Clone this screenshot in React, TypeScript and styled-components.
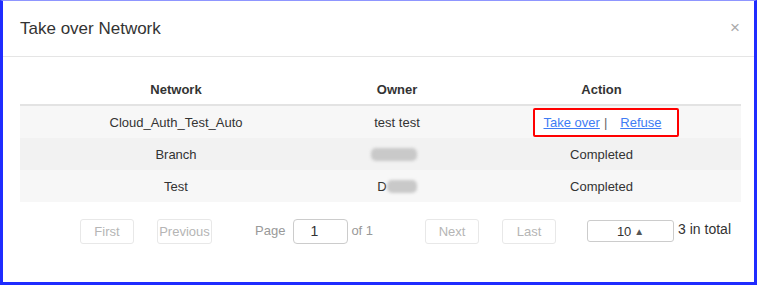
import styled, { createGlobalStyle } from 'styled-components';

const GlobalStyle = createGlobalStyle`
  html, body {
    margin: 0;
    padding: 0;
    background: #fff;
  }
  body {
    font-family: 'Liberation Sans', Arial, sans-serif;
  }
`;

type Row = { network: string; owner: 'text' | 'blur' | 'initial'; ownerText?: string; pending?: boolean };

const rows: Row[] = [
  { network: 'Cloud_Auth_Test_Auto', owner: 'text', ownerText: 'test test', pending: true },
  { network: 'Branch', owner: 'blur' },
  { network: 'Test', owner: 'initial' },
];

export default function App() {
  return (
    <>
      <GlobalStyle />
      <Frame>
        <Header>
          <Title>Take over Network</Title>
          <Close>×</Close>
        </Header>
        <Body>
          <Table>
            <thead>
              <tr>
                <Th $w={312}>Network</Th>
                <Th $w={130}>Owner</Th>
                <Th $w={279}>Action</Th>
              </tr>
            </thead>
            <tbody>
              {rows.map((r, i) => (
                <Tr key={r.network} $bg={i === 1 ? '#f2f2f2' : '#f7f7f7'}>
                  <Td>{r.network}</Td>
                  <Td>
                    {r.owner === 'text' && r.ownerText}
                    {r.owner === 'blur' && <Blur $w={46} $ml={-6} />}
                    {r.owner === 'initial' && (
                      <>
                        D<Blur $w={30} $ml={0} />
                      </>
                    )}
                  </Td>
                  <Td>
                    {r.pending ? (
                      <Highlight>
                        <Link>Take over</Link>
                        <Sep>|</Sep>
                        <Link>Refuse</Link>
                      </Highlight>
                    ) : (
                      'Completed'
                    )}
                  </Td>
                </Tr>
              ))}
            </tbody>
          </Table>
          <Pager>
            <PageButton $w={54} $ml={60}>First</PageButton>
            <PageButton $w={55} $ml={23}>Previous</PageButton>
            <PageLabel $ml={43}>Page</PageLabel>
            <PageInput>1</PageInput>
            <PageLabel $ml={3}>of 1</PageLabel>
            <PageButton $w={54} $ml={52}>Next</PageButton>
            <PageButton $w={54} $ml={23}>Last</PageButton>
            <SizeSelect>
              10 <Caret>▲</Caret>
            </SizeSelect>
            <Total>3 in total</Total>
          </Pager>
        </Body>
      </Frame>
    </>
  );
}

const Frame = styled.div`
  width: 757px;
  height: 285px;
  box-sizing: border-box;
  border-left: 3px solid #1f2cff;
  border-right: 3px solid #1f2cff;
  border-bottom: 3px solid #1f2cff;
  border-top: 1px solid #8f96ff;
  background: #fff;
  display: flex;
  flex-direction: column;
  overflow: hidden;
`;

const Header = styled.div`
  height: 55px;
  border-bottom: 1px solid #e5e5e5;
  display: flex;
  align-items: center;
  justify-content: space-between;
  padding: 0 14px 0 17px;
`;

const Title = styled.div`
  font-size: 17px;
  color: #333;
  margin-top: 0;
`;

const Close = styled.div`
  font-size: 17px;
  color: #aaa;
  line-height: 1;
  margin-top: -3px;
`;

const Body = styled.div`
  padding: 17px 13px 0 17px;
`;

const Table = styled.table`
  width: 721px;
  border-collapse: collapse;
  table-layout: fixed;
  font-size: 13px;
  color: #333;
`;

const Th = styled.th<{ $w: number }>`
  width: ${(p) => p.$w}px;
  height: 30px;
  padding: 0;
  font-weight: bold;
  text-align: center;
  border-bottom: 2px solid #e3e3e3;
`;

const Tr = styled.tr<{ $bg: string }>`
  background: ${(p) => p.$bg};
`;

const Td = styled.td`
  height: 32px;
  padding: 0;
  text-align: center;
  vertical-align: middle;
`;

const Blur = styled.span<{ $w: number; $ml: number }>`
  display: inline-block;
  width: ${(p) => p.$w}px;
  height: 13px;
  margin-left: ${(p) => p.$ml}px;
  vertical-align: -2px;
  background: #c9c9c9;
  border-radius: 5px;
  filter: blur(1.5px);
`;

const Highlight = styled.span`
  display: inline-flex;
  align-items: center;
  box-sizing: border-box;
  width: 146px;
  height: 29px;
  margin-left: 8px;
  padding-left: 9px;
  border: 2px solid #f00;
  border-radius: 2px;
  background: #fff;
`;

const Link = styled.a`
  color: #3f7cf4;
  text-decoration: underline;
  cursor: pointer;
`;

const Sep = styled.span`
  color: #666;
  margin: 0 13px 0 4px;
`;

const Pager = styled.div`
  display: flex;
  align-items: center;
  margin-top: 16px;
  height: 26px;
  font-size: 13px;
`;

const PageButton = styled.div<{ $w: number; $ml: number }>`
  box-sizing: border-box;
  width: ${(p) => p.$w}px;
  height: 25px;
  margin-left: ${(p) => p.$ml}px;
  border: 1px solid #e8e8e8;
  border-radius: 3px;
  color: #b5b5b5;
  display: flex;
  align-items: center;
  justify-content: center;
  white-space: nowrap;
`;

const PageLabel = styled.span<{ $ml: number }>`
  margin-left: ${(p) => p.$ml}px;
  color: #999;
  margin-top: -2px;
`;

const PageInput = styled.div`
  box-sizing: border-box;
  width: 55px;
  height: 25px;
  margin-left: 8px;
  border: 1px solid #ccc;
  border-radius: 4px;
  color: #333;
  font-size: 14px;
  padding-left: 16px;
  display: flex;
  align-items: center;
`;

const SizeSelect = styled.div`
  box-sizing: border-box;
  width: 87px;
  height: 22px;
  margin-left: 31px;
  border: 1px solid #ccc;
  border-radius: 3px;
  color: #333;
  font-size: 13px;
  display: flex;
  align-items: center;
  justify-content: center;
  gap: 3px;
`;

const Caret = styled.span`
  font-size: 10px;
  color: #555;
`;

const Total = styled.span`
  margin-left: 4px;
  margin-top: -5px;
  font-size: 14px;
  color: #333;
`;
